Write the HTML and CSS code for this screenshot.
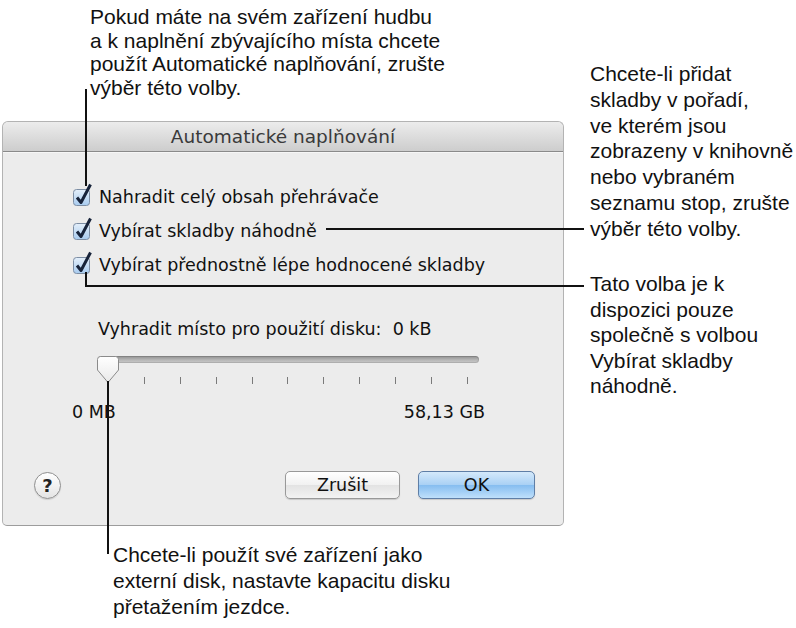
FILE: index.html
```html
<!DOCTYPE html>
<html lang="cs">
<head>
<meta charset="utf-8">
<title>Automatické naplňování</title>
<link rel="stylesheet" href="styles.css">
</head>
<body>
<div class="canvas">
  <div class="dialog">
    <div class="titlebar">Automatické naplňování</div>
    <div class="options">
      <div class="opt">
        <svg class="cb" width="20" height="24" viewBox="0 0 20 24"><defs><linearGradient id="g1" x1="0" y1="0" x2="0" y2="1"><stop offset="0" stop-color="#e4effa"/><stop offset="1" stop-color="#a8cbef"/></linearGradient></defs><rect x="1.5" y="7.5" width="16" height="16" rx="3" fill="url(#g1)" stroke="#7d8ea4"/><path d="M5 15.5 L9 20.5 L18.5 2.5" fill="none" stroke="#17233a" stroke-width="3" stroke-linejoin="round"/></svg>
        <span>Nahradit celý obsah přehrávače</span>
      </div>
      <div class="opt">
        <svg class="cb" width="20" height="24" viewBox="0 0 20 24"><rect x="1.5" y="7.5" width="16" height="16" rx="3" fill="url(#g1)" stroke="#7d8ea4"/><path d="M5 15.5 L9 20.5 L18.5 2.5" fill="none" stroke="#17233a" stroke-width="3" stroke-linejoin="round"/></svg>
        <span>Vybírat skladby náhodně</span>
      </div>
      <div class="opt">
        <svg class="cb" width="20" height="24" viewBox="0 0 20 24"><rect x="1.5" y="7.5" width="16" height="16" rx="3" fill="url(#g1)" stroke="#7d8ea4"/><path d="M5 15.5 L9 20.5 L18.5 2.5" fill="none" stroke="#17233a" stroke-width="3" stroke-linejoin="round"/></svg>
        <span>Vybírat přednostně lépe hodnocené skladby</span>
      </div>
    </div>
    <div class="disk-label">Vyhradit místo pro použití disku:&nbsp; 0 kB</div>
    <div class="slider">
      <div class="track"></div>
      <svg class="thumb" width="24" height="28" viewBox="0 0 24 28"><defs><linearGradient id="tg" x1="0" y1="0" x2="0" y2="1"><stop offset="0" stop-color="#ffffff"/><stop offset="1" stop-color="#e9e9e9"/></linearGradient></defs><path d="M4.5 0.5 H19.5 Q22.5 0.5 22.5 3.5 V14 L12 26.5 L1.5 14 V3.5 Q1.5 0.5 4.5 0.5 Z" fill="url(#tg)" stroke="#8b8b8b"/></svg>
      <div class="ticks">
        <i></i><i></i><i></i><i></i><i></i><i></i><i></i><i></i><i></i><i></i><i></i>
      </div>
    </div>
    <div class="scale">
      <span>0 MB</span>
      <span>58,13 GB</span>
    </div>
    <div class="buttons">
      <div class="help">?</div>
      <div class="spacer"></div>
      <div class="btn">Zrušit</div>
      <div class="btn btn-ok">OK</div>
    </div>
  </div>

  <p class="note note-top">Pokud máte na svém zařízení hudbu<br>a k naplnění zbývajícího místa chcete<br>použít Automatické naplňování, zrušte<br>výběr této volby.</p>
  <p class="note note-right1">Chcete-li přidat<br>skladby v pořadí,<br>ve kterém jsou<br>zobrazeny v knihovně<br>nebo vybraném<br>seznamu stop, zrušte<br>výběr této volby.</p>
  <p class="note note-right2">Tato volba je k<br>dispozici pouze<br>společně s volbou<br>Vybírat skladby<br>náhodně.</p>
  <p class="note note-bottom">Chcete-li použít své zařízení jako<br>externí disk, nastavte kapacitu disku<br>přetažením jezdce.</p>

  <div class="line v l-top"></div>
  <div class="line h l-opt2"></div>
  <div class="line v l-opt3v"></div>
  <div class="line h l-opt3h"></div>
  <div class="line v l-slider"></div>
</div>
</body>
</html>
```

FILE: styles.css
```css
html, body {
  margin: 0;
  padding: 0;
  background: #ffffff;
}

.canvas {
  position: relative;
  width: 796px;
  height: 628px;
  overflow: hidden;
  padding-top: 121px;
  box-sizing: border-box;
}

.dialog {
  box-sizing: border-box;
  margin-left: 2px;
  width: 562px;
  height: 405px;
  border: 1px solid #b3b3b3;
  border-bottom-color: #9c9c9c;
  border-radius: 6px 6px 5px 5px;
  background: #ececec;
  font-family: "DejaVu Sans", sans-serif;
  font-size: 17.5px;
  color: #111;
  overflow: hidden;
}

.titlebar {
  height: 29px;
  line-height: 29px;
  font-size: 18.5px;
  text-align: center;
  color: #3a3a3a;
  background: linear-gradient(#ececec, #cdcdcd);
  border-bottom: 1px solid #8a8a8a;
  box-shadow: 0 1px 0 #f6f6f6;
  border-radius: 5px 5px 0 0;
}

.options {
  padding: 28px 0 0 69px;
}

.opt {
  display: flex;
  align-items: center;
  height: 34px;
}

.cb {
  margin-top: -6px;
  margin-right: 7px;
  flex: none;
}

.disk-label {
  margin-top: 37px;
  padding-left: 95px;
  line-height: 20px;
}

.slider {
  position: relative;
  margin: 17px 0 0 95px;
  width: 381px;
  height: 34px;
}

.track {
  margin-top: 4px;
  height: 7px;
  border-radius: 4px;
  background: linear-gradient(#8f8f8f, #b9b9b9 60%, #c9c9c9);
  box-shadow: inset 0 0 0 1px rgba(0,0,0,0.12);
}

.thumb {
  position: absolute;
  left: -2px;
  top: 0;
}

.ticks {
  display: flex;
  justify-content: space-between;
  margin-top: 14px;
  padding: 0 11px 0 10px;
}

.ticks i {
  display: block;
  width: 1px;
  height: 7px;
  background: #7a7a7a;
}

.scale {
  display: flex;
  justify-content: space-between;
  margin: 12px 0 0 69px;
  width: 413px;
  line-height: 20px;
}

.buttons {
  display: flex;
  align-items: center;
  margin-top: 49px;
  padding: 0 28px 0 31px;
  height: 28px;
}

.spacer {
  flex: 1;
}

.help {
  box-sizing: border-box;
  width: 27px;
  height: 27px;
  border-radius: 50%;
  border: 1px solid #8f8f8f;
  background: linear-gradient(#ffffff, #e4e4e4);
  box-shadow: 0 1px 1px rgba(0,0,0,0.12);
  text-align: center;
  line-height: 25px;
  font-weight: bold;
  font-size: 18px;
  color: #222;
}

.btn {
  box-sizing: border-box;
  width: 115px;
  height: 28px;
  line-height: 26px;
  text-align: center;
  border: 1px solid #999;
  border-radius: 5px;
  background: linear-gradient(#ffffff, #f1f1f1 50%, #e3e3e3 51%, #f3f3f3);
  box-shadow: 0 1px 1px rgba(0,0,0,0.15);
  color: #111;
}

.btn-ok {
  width: 117px;
  margin-left: 18px;
  border-color: #5f7ea6;
  background: linear-gradient(#d4e9fb, #a9d0f4 50%, #86bdf0 51%, #bfe0fb);
}

.note {
  position: absolute;
  margin: 0;
  font-family: "Liberation Sans", Arial, sans-serif;
  font-size: 21px;
  color: #111;
}

.note-top {
  left: 90px;
  top: 5px;
  line-height: 23.7px;
}

.note-right1 {
  left: 590px;
  top: 61px;
  line-height: 25.8px;
}

.note-right2 {
  left: 590px;
  top: 271px;
  line-height: 25.5px;
}

.note-bottom {
  left: 113px;
  top: 542px;
  line-height: 26px;
}

.line {
  position: absolute;
  background: #111;
}

.line.v {
  width: 2px;
}

.line.h {
  height: 2px;
}

.l-top {
  left: 85px;
  top: 89px;
  height: 97px;
}

.l-opt2 {
  left: 326px;
  top: 228px;
  width: 258px;
}

.l-opt3v {
  left: 85px;
  top: 272px;
  height: 15px;
}

.l-opt3h {
  left: 85px;
  top: 285px;
  width: 499px;
}

.l-slider {
  left: 107px;
  top: 381px;
  height: 173px;
}
```
